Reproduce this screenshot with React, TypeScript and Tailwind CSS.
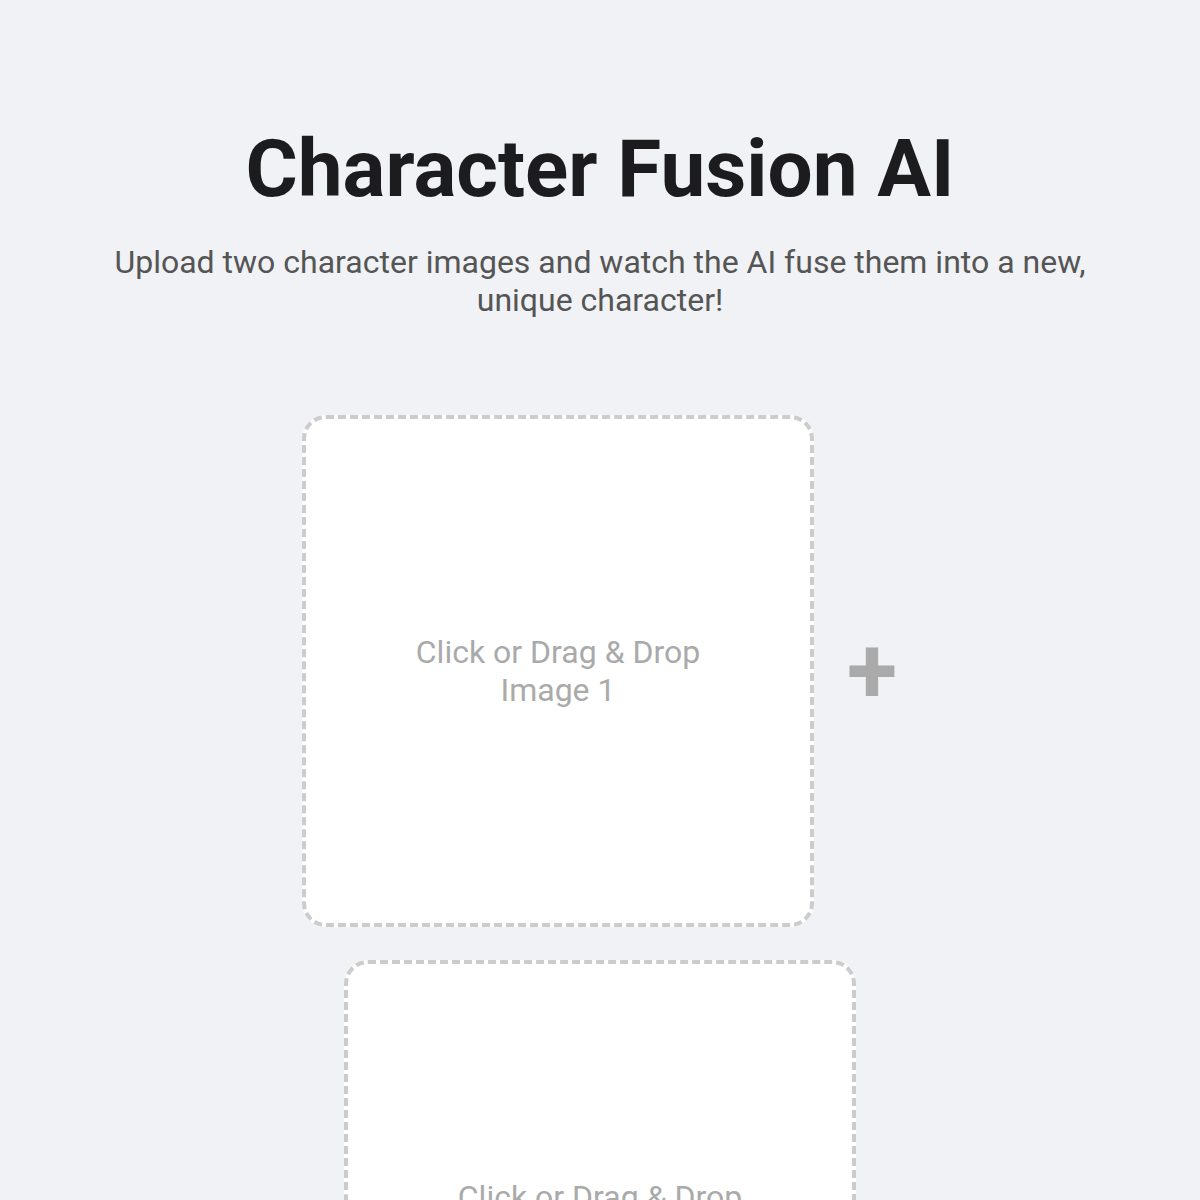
const UploadBox = ({ label }: { label: string }) => (
  <div className="w-[512px] h-[512px] bg-white border-4 border-dashed border-[#cccccc] rounded-3xl flex items-center justify-center cursor-pointer">
    <p className="text-[32px] leading-[38px] text-[#aaaaaa] text-center">
      Click or Drag &amp; Drop
      <br />
      {label}
    </p>
  </div>
);

const App = () => {
  return (
    <div className="min-h-screen bg-[#f0f2f5] font-['Roboto',sans-serif] flex flex-col items-center px-5 pt-[121px] pb-12">
      <h1 className="text-[80px] leading-[96px] font-bold text-[#1c1c1e] text-center">
        Character Fusion AI
      </h1>
      <p className="mt-[26px] max-w-[1000px] text-[32px] leading-[38px] text-[#555555] text-center">
        Upload two character images and watch the AI fuse them into a new, unique character!
      </p>
      <div className="mt-[96px] w-full max-w-[1100px] flex flex-wrap justify-center items-center gap-x-8 gap-y-[33px]">
        <UploadBox label="Image 1" />
        <div className="w-[52px] flex justify-center text-[92px] leading-none font-bold text-[#aaaaaa]">+</div>
        <UploadBox label="Image 2" />
      </div>
    </div>
  );
};

export default App;
